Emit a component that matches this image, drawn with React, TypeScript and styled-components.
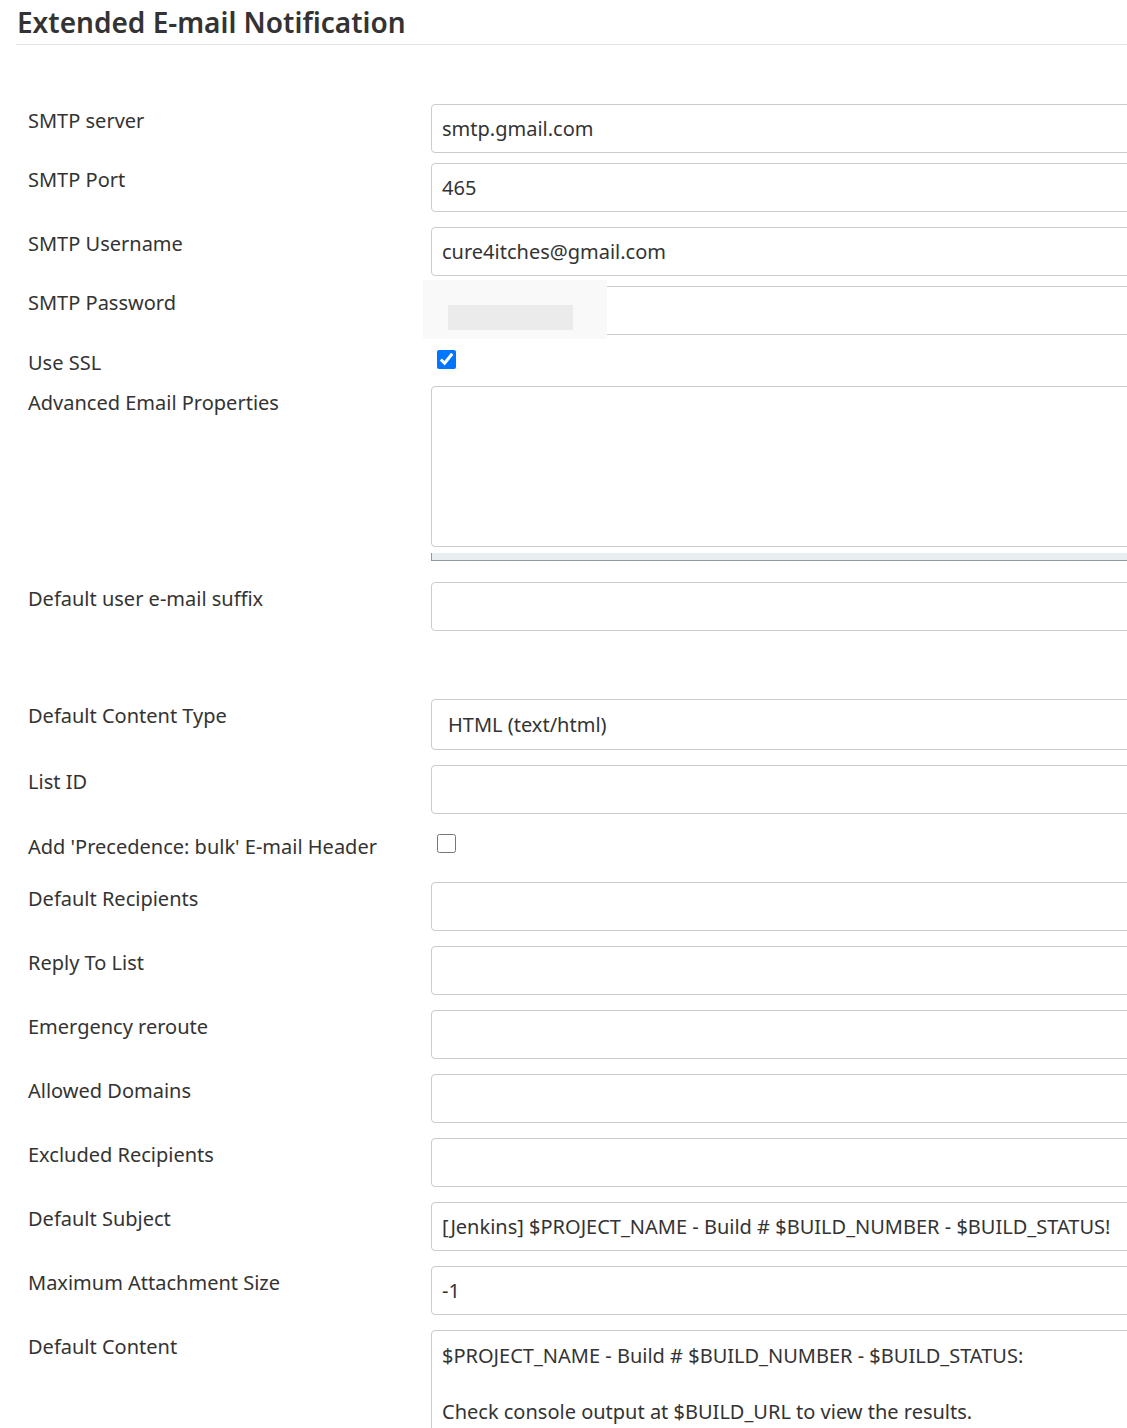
import React from "react";
import styled, { createGlobalStyle } from "styled-components";

const GlobalStyle = createGlobalStyle`
  html, body {
    margin: 0;
    padding: 0;
    background: #fff;
    overflow-x: hidden;
  }
  body {
    font-family: "Noto Sans", "Open Sans", sans-serif;
    color: #333;
  }
`;

const Page = styled.div`
  width: 1127px;
  overflow: hidden;
  padding-bottom: 40px;
`;

const Header = styled.h2`
  margin: 0 0 0 16px;
  padding: 0 0 0 1px;
  height: 45px;
  box-sizing: border-box;
  font-size: 28px;
  font-weight: 600;
  line-height: 44px;
  color: #333;
  border-bottom: 1px solid #e2e2e2;
`;

const Form = styled.div`
  padding-top: 59px;
`;

const Row = styled.div<{ $gap?: number }>`
  display: grid;
  grid-template-columns: 431px 760px;
  margin-bottom: ${(p) => p.$gap ?? 15}px;
`;

const Label = styled.div`
  padding-left: 28px;
  padding-top: 2px;
  font-size: 20px;
  line-height: 30px;
  color: #333;
`;

const Field = styled.div`
  position: relative;
`;

const TextInput = styled.input`
  display: block;
  width: 100%;
  height: 49px;
  box-sizing: border-box;
  border: 1px solid #ccc;
  border-radius: 4px;
  padding: 0 10px;
  font-family: inherit;
  font-size: 20px;
  color: #333;
  background: #fff;
  outline: none;
`;

const Select = styled.div`
  height: 51px;
  box-sizing: border-box;
  border: 1px solid #ccc;
  border-radius: 4px;
  padding: 0 16px;
  font-size: 20px;
  line-height: 49px;
  color: #333;
`;

const Textarea = styled.div<{ $h: number }>`
  height: ${(p) => p.$h}px;
  box-sizing: border-box;
  border: 1px solid #ccc;
  border-radius: 4px;
  padding: 11px 10px;
  font-size: 20px;
  line-height: 28px;
  color: #333;
  white-space: pre-wrap;
`;

const ResizeBar = styled.div`
  height: 7px;
  margin-top: 6px;
  background: #e9eff1;
  border-left: 1px solid #8b9aa5;
  border-bottom: 1px solid #8b9aa5;
`;

const Redact = styled.div`
  position: absolute;
  left: -8px;
  top: -6px;
  width: 184px;
  height: 59px;
  background: #f9f9f9;
  &::after {
    content: "";
    position: absolute;
    left: 25px;
    top: 25px;
    width: 125px;
    height: 25px;
    background: #ebebeb;
  }
`;

const CheckWrap = styled.div`
  padding: 4px 0 0 6px;
`;

const Check = styled.input.attrs({ type: "checkbox" })`
  display: block;
  width: 19px;
  height: 19px;
  margin: 0;
  accent-color: #0075ff;
`;

const Spacer = styled.div<{ $h: number }>`
  height: ${(p) => p.$h}px;
`;

const Text = ({ label, value = "", gap }: { label: string; value?: string; gap?: number }) => (
  <Row $gap={gap}>
    <Label>{label}</Label>
    <Field>
      <TextInput readOnly value={value} />
    </Field>
  </Row>
);

export default function App() {
  return (
    <Page>
      <GlobalStyle />
      <Header>Extended E-mail Notification</Header>
      <Form>
        <Text label="SMTP server" value="smtp.gmail.com" gap={10} />
        <Text label="SMTP Port" value="465" gap={15} />
        <Text label="SMTP Username" value="cure4itches@gmail.com" gap={10} />
        <Row $gap={11}>
          <Label>SMTP Password</Label>
          <Field>
            <TextInput readOnly type="password" value="" />
            <Redact />
          </Field>
        </Row>
        <Row $gap={8}>
          <Label>Use SSL</Label>
          <CheckWrap>
            <Check defaultChecked />
          </CheckWrap>
        </Row>
        <Row $gap={21}>
          <Label>Advanced Email Properties</Label>
          <Field>
            <Textarea $h={161} />
            <ResizeBar />
          </Field>
        </Row>
        <Text label="Default user e-mail suffix" gap={0} />
        <Spacer $h={68} />
        <Row>
          <Label>Default Content Type</Label>
          <Field>
            <Select>HTML (text/html)</Select>
          </Field>
        </Row>
        <Text label="List ID" gap={16} />
        <Row $gap={20}>
          <Label>Add 'Precedence: bulk' E-mail Header</Label>
          <CheckWrap>
            <Check />
          </CheckWrap>
        </Row>
        <Text label="Default Recipients" />
        <Text label="Reply To List" />
        <Text label="Emergency reroute" />
        <Text label="Allowed Domains" />
        <Text label="Excluded Recipients" />
        <Text label="Default Subject" value="[Jenkins] $PROJECT_NAME - Build # $BUILD_NUMBER - $BUILD_STATUS!" />
        <Text label="Maximum Attachment Size" value="-1" />
        <Row>
          <Label>Default Content</Label>
          <Field>
            <Textarea $h={200}>
              {"$PROJECT_NAME - Build # $BUILD_NUMBER - $BUILD_STATUS:\n\nCheck console output at $BUILD_URL to view the results."}
            </Textarea>
          </Field>
        </Row>
      </Form>
    </Page>
  );
}
